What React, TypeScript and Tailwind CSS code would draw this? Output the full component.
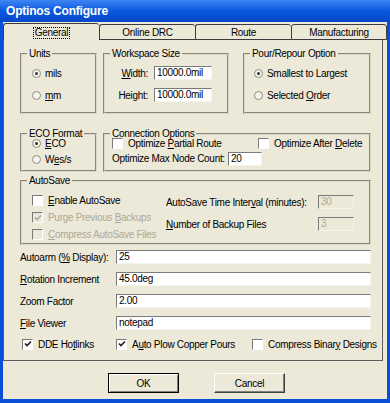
import type { ReactNode } from 'react';

const Radio = ({ on, children, h = 'h-[17px]' }: { on?: boolean; children: ReactNode; h?: string }) => (
  <div className={'flex items-center gap-[4px] ' + h}>
    <span className="w-[9px] h-[9px] rounded-full border border-[#8d8b80] bg-[#f4f3ee] flex items-center justify-center">
      {on && <span className="w-[3px] h-[3px] rounded-full bg-[#333]" />}
    </span>
    <span>{children}</span>
  </div>
);

const Box = ({ on, off }: { on?: boolean; off?: boolean }) => (
  <span
    className={
      'w-[11px] h-[11px] shrink-0 border border-t-[#7a7a7a] border-l-[#7a7a7a] border-r-white border-b-white flex items-center justify-center ' +
      (off ? 'bg-[#ece9d8]' : 'bg-white')
    }
  >
    {on && (
      <svg width="8" height="8" viewBox="0 0 8 8">
        <path d="M1 3.5 L3 5.5 L7 1.5" stroke={off ? '#aca899' : '#1e1e1e'} strokeWidth="1.6" fill="none" />
      </svg>
    )}
  </span>
);

const Check = ({ on, off, children }: { on?: boolean; off?: boolean; children: ReactNode }) => (
  <div className={'flex items-center gap-[5px] h-[17px] ' + (off ? 'text-[#aca899]' : '')}>
    <Box on={on} off={off} />
    <span>{children}</span>
  </div>
);

const Field = ({ value, className, off }: { value: string; className: string; off?: boolean }) => (
  <div
    className={
      'h-[14px] border border-t-[#7a7a7a] border-l-[#7a7a7a] border-r-[#f4f3ee] border-b-[#f4f3ee] pl-[2px] leading-[12px] ' +
      (off ? 'bg-[#ece9d8] text-[#aca899] ' : 'bg-white ') +
      className
    }
  >
    {value}
  </div>
);

const Group = ({ title, className, children }: { title: string; className: string; children: ReactNode }) => (
  <fieldset className={'border-2 [border-style:groove] border-[#dcd8c8] ' + className}>
    <legend className="ml-[5px] px-[2px] leading-[12px]">{title}</legend>
    {children}
  </fieldset>
);

const tabs = ['General', 'Online DRC', 'Route', 'Manufacturing'];

export default function App() {
  return (
    <div className="w-[390px] h-[403px] bg-[#0a4fd6] flex flex-col overflow-hidden font-['Liberation_Sans',Arial,sans-serif] text-[10px] tracking-[-0.3px] text-black">
      <div className="h-[22px] shrink-0 bg-gradient-to-b from-[#3d86f3] via-[#0a57de] to-[#0848c8] flex items-center pl-[6px]">
        <span className="text-white font-bold text-[12px] tracking-[-0.2px]">Optinos Configure</span>
      </div>

      <div className="mx-[3px] h-[377px] bg-[#ece9d8] flex flex-col">
        <div className="flex items-end h-[17px] mt-[1px] -mb-px relative z-10">
          {tabs.map((t, i) => (
            <div
              key={t}
              className={
                'w-[96px] flex justify-center rounded-t-[3px] border-t border-l border-[#3c3c3c] bg-[#ece9d8] ' +
                (i === 3 ? 'border-r ' : '') +
                (i === 0 ? 'h-[17px] pt-[3px]' : 'h-[16px] pt-[3px] border-b')
              }
            >
              <span className={i === 0 ? 'border border-dotted border-black px-[1px] h-[12px] leading-[10px]' : 'leading-[10px]'}>
                {t}
              </span>
            </div>
          ))}
        </div>

        <div className="w-[380px] h-[322px] border border-[#5c5c5c] pl-[16px] pt-[8px] flex flex-col">
          <div className="flex h-[66px]">
            <Group title="Units" className="w-[77px] h-[66px]">
              <div className="pl-[10px] pt-[5px] flex flex-col gap-[5px]">
                <Radio on>mils</Radio>
                <Radio>
                  <u>m</u>m
                </Radio>
              </div>
            </Group>
            <Group title="Workspace Size" className="ml-[6px] w-[126px] h-[66px]">
              <div className="pt-[6px] flex flex-col gap-[8px]">
                <div className="flex items-center h-[14px]">
                  <span className="w-[49px] text-right pr-[6px]">
                    <u>W</u>idth:
                  </span>
                  <Field value="10000.0mil" className="w-[58px]" />
                </div>
                <div className="flex items-center h-[14px]">
                  <span className="w-[49px] text-right pr-[6px]">Height:</span>
                  <Field value="10000.0mil" className="w-[58px]" />
                </div>
              </div>
            </Group>
            <Group title="Pour/Repour Option" className="ml-[14px] w-[128px] h-[66px]">
              <div className="pl-[9px] pt-[5px] flex flex-col gap-[5px]">
                <Radio on>Smallest to Largest</Radio>
                <Radio>
                  Selected <u>O</u>rder
                </Radio>
              </div>
            </Group>
          </div>

          <div className="flex h-[44px] mt-[14px]">
            <Group title="ECO Format" className="w-[77px] h-[44px]">
              <div className="pl-[10px] -mt-[4px] flex flex-col">
                <Radio on h="h-[15px]">
                  <u>E</u>CO
                </Radio>
                <Radio h="h-[16px]">
                  W<u>e</u>s/s
                </Radio>
              </div>
            </Group>
            <Group title="Connection Options" className="ml-[6px] w-[268px] h-[44px]">
              <div className="pl-[7px] -mt-[5px] flex flex-col">
                <div className="flex h-[16px] items-center">
                  <div className="w-[146px]">
                    <Check>
                      Optimize <u>P</u>artial Route
                    </Check>
                  </div>
                  <Check>
                    Optimize After <u>D</u>elete
                  </Check>
                </div>
                <div className="flex items-center h-[15px]">
                  <span className="w-[116px]">Optimize Max Node Count:</span>
                  <Field value="20" className="w-[34px] h-[13px]" />
                </div>
              </div>
            </Group>
          </div>

          <Group title="AutoSave" className="mt-[3px] w-[351px] h-[70px]">
            <div className="flex pl-[10px]">
              <div className="w-[134px] pt-[5px] flex flex-col">
                <Check>
                  <u>E</u>nable AutoSave
                </Check>
                <Check on off>
                  Purge Previous <u>B</u>ackups
                </Check>
                <Check off>
                  <u>C</u>ompress AutoSave Files
                </Check>
              </div>
              <div className="pt-[8px] flex flex-col gap-[8px]">
                <div className="flex items-center h-[14px]">
                  <span className="w-[152px]">
                    AutoSave Time Inter<u>v</u>al (minutes):
                  </span>
                  <Field value="30" off className="w-[36px]" />
                </div>
                <div className="flex items-center h-[14px]">
                  <span className="w-[152px]">
                    <u>N</u>umber of Backup Files
                  </span>
                  <Field value="3" off className="w-[36px]" />
                </div>
              </div>
            </div>
          </Group>

          <div className="mt-[5px] flex flex-col gap-[8px]">
            {[
              [
                <>
                  Autoarm (<u>%</u> Display):
                </>,
                '25',
              ],
              [
                <>
                  <u>R</u>otation Increment
                </>,
                '45.0deg',
              ],
              [<>Zoom Factor</>, '2.00'],
              [
                <>
                  <u>F</u>ile Viewer
                </>,
                'notepad',
              ],
            ].map(([label, value], i) => (
              <div key={i} className="flex items-center h-[14px]">
                <span className="w-[96px]">{label}</span>
                <Field value={value as string} className="w-[255px]" />
              </div>
            ))}
          </div>

          <div className="mt-[7px] flex items-center h-[14px] pl-[2px]">
            <div className="w-[94px]">
              <Check on>
                DDE Ho<u>t</u>links
              </Check>
            </div>
            <div className="w-[136px]">
              <Check on>
                A<u>u</u>to Plow Copper Pours
              </Check>
            </div>
            <Check>
              Compress Binar<u>y</u> Designs
            </Check>
          </div>
        </div>

        <div className="flex justify-center gap-[35px] pt-[12px] pl-[3px]">
          <button className="w-[71px] h-[20px] border border-black bg-[#ece9d8] shadow-[inset_1px_1px_0_#fff,inset_-1px_-1px_0_#808080]">
            OK
          </button>
          <button className="w-[71px] h-[20px] border border-t-white border-l-white border-r-[#404040] border-b-[#404040] bg-[#ece9d8] shadow-[inset_-1px_-1px_0_#808080]">
            Cancel
          </button>
        </div>
      </div>
    </div>
  );
}
